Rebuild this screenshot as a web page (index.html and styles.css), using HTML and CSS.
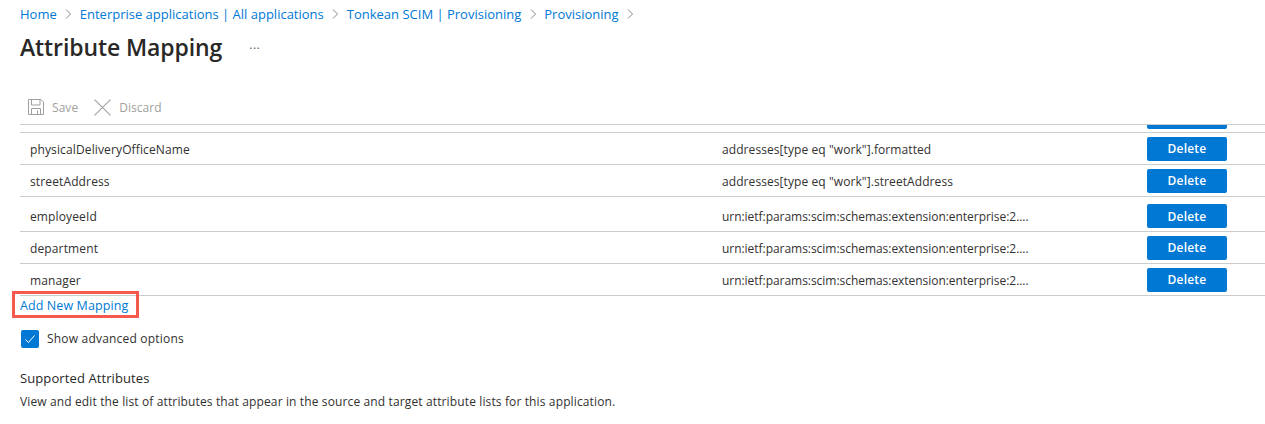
FILE: index.html
```html
<!DOCTYPE html>
<html lang="en">
<head>
<meta charset="UTF-8" />
<title>Attribute Mapping</title>
<link rel="stylesheet" href="styles.css">
</head>
<body>
<nav class="crumbs">
  <a href="#">Home</a>
  <svg class="chev" viewBox="0 0 6 10"><path d="M1 .5 5.500 5 1 9.500"/></svg>
  <a href="#">Enterprise applications | All applications</a>
  <svg class="chev" viewBox="0 0 6 10"><path d="M1 .5 5.500 5 1 9.500"/></svg>
  <a href="#">Tonkean SCIM | Provisioning</a>
  <svg class="chev" viewBox="0 0 6 10"><path d="M1 .5 5.500 5 1 9.500"/></svg>
  <a href="#">Provisioning</a>
  <svg class="chev" viewBox="0 0 6 10"><path d="M1 .5 5.500 5 1 9.500"/></svg>
</nav>

<header class="title-row">
  <h1>Attribute Mapping</h1>
  <span class="more">...</span>
</header>

<div class="toolbar">
  <span class="tool">
    <svg viewBox="0 0 16 16"><path d="M.5.5h12.500l2.500 2.500v12.500H.5zM3.500.5v5.500h8.500V.5M3.500 15.500v-6h9v6M9.500 11.500v4"/></svg>
    Save
  </span>
  <span class="tool">
    <svg class="ico-x" viewBox="0 0 16 16"><path d="M.5.5l15 15M15.500.5l-15 15"/></svg>
    Discard
  </span>
</div>

<section class="mappings">
  <div class="row row-stub" aria-hidden="true"><span class="del del-stub"></span></div>
  <div class="row">
    <span class="source">physicalDeliveryOfficeName</span>
    <span class="target">addresses[type eq "work"].formatted</span>
    <button class="del" type="button">Delete</button>
  </div>
  <div class="row">
    <span class="source">streetAddress</span>
    <span class="target">addresses[type eq "work"].streetAddress</span>
    <button class="del" type="button">Delete</button>
  </div>
  <div class="row row-tall">
    <span class="source">employeeId</span>
    <span class="target target-urn">urn:ietf:params:scim:schemas:extension:enterprise:2....</span>
    <button class="del" type="button">Delete</button>
  </div>
  <div class="row">
    <span class="source">department</span>
    <span class="target target-urn">urn:ietf:params:scim:schemas:extension:enterprise:2....</span>
    <button class="del" type="button">Delete</button>
  </div>
  <div class="row">
    <span class="source">manager</span>
    <span class="target target-urn">urn:ietf:params:scim:schemas:extension:enterprise:2....</span>
    <button class="del" type="button">Delete</button>
  </div>
</section>

<div class="add-row">
  <a class="add-link" href="#">Add New Mapping</a>
</div>

<label class="check">
  <span class="box"><svg viewBox="0 0 12 12"><path d="M1.500 6.500 4.500 9.500 10.500 2.500"/></svg></span>
  Show advanced options
</label>

<h2>Supported Attributes</h2>
<p class="note">View and edit the list of attributes that appear in the source and target attribute lists for this application.</p>
</body>
</html>
```

FILE: styles.css
```css
* {
  box-sizing: border-box;
}
body {
  margin: 0;
  height: 424px;
  overflow: hidden;
  background: #fff;
  color: #323130;
  font-family: 'Open Sans', 'Noto Sans', sans-serif;
  font-size: 12px;
}
a {
  color: #0078d4;
  text-decoration: none;
}

/* Breadcrumb */
.crumbs {
  display: flex;
  align-items: center;
  gap: 8.500px;
  height: 16px;
  margin: 6px 0 0 20px;
  font-size: 13px;
}
.chev {
  width: 6px;
  height: 10px;
  fill: none;
  stroke: #8a8886;
  stroke-width: 1;
}

/* Title */
.title-row {
  display: flex;
  align-items: center;
  height: 32px;
  margin: 9px 0 0 20px;
}
h1 {
  margin: 0;
  font-size: 23px;
  font-weight: 600;
  letter-spacing: -0.1px;
  color: #292827;
}
.more {
  margin: -5px 0 0 27px;
  font-size: 12px;
  letter-spacing: 0.5px;
  color: #605e5c;
}

/* Toolbar */
.toolbar {
  display: flex;
  gap: 16px;
  align-items: center;
  height: 34px;
  margin: 27px 0 0 28px;
  color: #a19f9d;
}
.tool {
  display: flex;
  align-items: center;
  gap: 8px;
  letter-spacing: 0.05px;
}
.toolbar svg {
  width: 16px;
  height: 16px;
  fill: none;
  stroke: #a19f9d;
  stroke-width: 1;
}
.toolbar .ico-x {
  width: 17px;
  height: 17px;
}

/* Mapping rows */
.mappings {
  margin-left: 20px;
  border-top: 1px solid #ccc;
}
.row {
  display: flex;
  align-items: center;
  height: 32px;
  padding-left: 10px;
  border-bottom: 1px solid #ccc;
}
.row-stub {
  display: block;
  height: 8px;
  padding: 0;
  overflow: hidden;
}
.del-stub {
  display: block;
  margin: -20px 0 0 1127px;
}
.row-tall {
  height: 35px;
  padding-top: 4px;
}
.source {
  width: 692px;
  padding-top: 2px;
  letter-spacing: 0.13px;
}
.target {
  width: 425px;
  padding-top: 2px;
  letter-spacing: 0.08px;
}
.target-urn {
  letter-spacing: -0.04px;
}
.row-tall .source, .row-tall .target {
  padding-top: 0;
}
.del {
  width: 80px;
  height: 24px;
  padding: 0;
  border: 0;
  border-radius: 2px;
  background: #0078d4;
  color: #fff;
  font: 600 12px 'Open Sans', 'Noto Sans', sans-serif;
  letter-spacing: 0.2px;
}

/* Add link, red callout sits over the last row line */
.add-row {
  margin: -5px 0 0 12px;
}
.add-link {
  display: flex;
  align-items: center;
  width: 127px;
  height: 27px;
  padding: 2px 0 0 5px;
  border: 3px solid #f5584d;
  font-size: 12.500px;
  letter-spacing: 0.1px;
}

/* Checkbox */
.check {
  display: flex;
  align-items: flex-start;
  gap: 8px;
  height: 18px;
  margin: 12px 0 0 21px;
  line-height: 18px;
  letter-spacing: 0.2px;
}
.box {
  display: flex;
  align-items: center;
  justify-content: center;
  width: 18px;
  height: 18px;
  border-radius: 2px;
  background: #0078d4;
}
.box svg {
  width: 12px;
  height: 12px;
  fill: none;
  stroke: #fff;
  stroke-width: 1;
}

/* Footer text */
h2 {
  margin: 21px 0 0 20px;
  font-size: 13px;
  line-height: 18px;
  font-weight: 400;
  letter-spacing: 0.1px;
  color: #292827;
}
.note {
  margin: 7px 0 0 20px;
  font-size: 12px;
  line-height: 16px;
  letter-spacing: 0.13px;
}
```
